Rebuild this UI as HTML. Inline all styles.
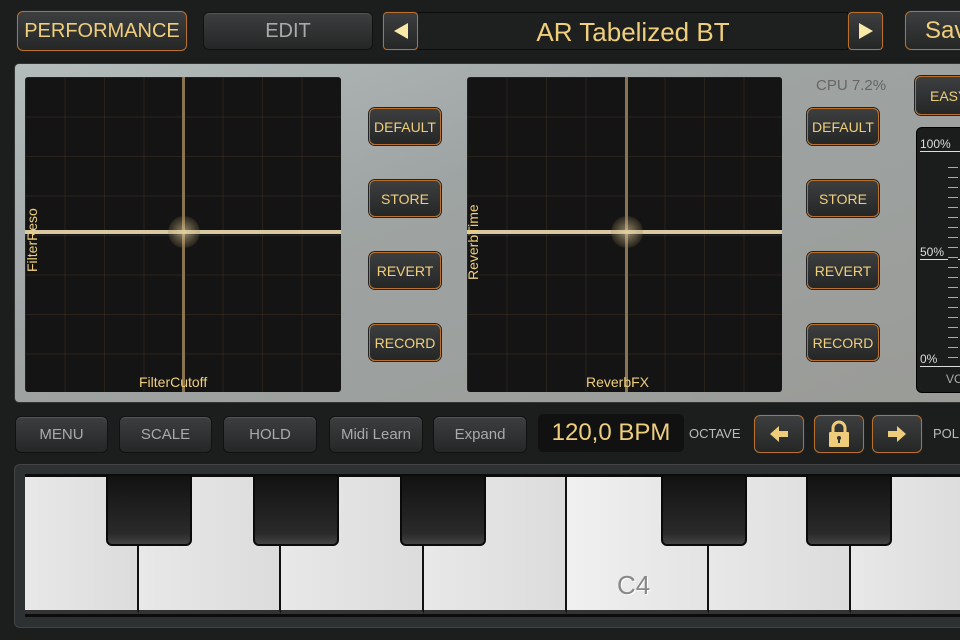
<!DOCTYPE html><html><head><style>
body{margin:0;width:960px;height:640px;overflow:hidden;background:#1c1d1d;font-family:"Liberation Sans",sans-serif;position:relative}
div{box-sizing:border-box}
.a{position:absolute}
.btn{position:absolute;border-radius:6px;background:linear-gradient(#3c3e3f,#252727);border:1px solid #111;color:#bbb;display:flex;align-items:center;justify-content:center;box-shadow:inset 0 1px 0 #555}
.ob{border:1.5px solid #b9702e;color:#f0cf7c;box-shadow:0 0 0 1px #222}
.pad{position:absolute;background-color:#141414;background-image:linear-gradient(90deg,rgba(80,60,40,.35) 1px,transparent 1px),linear-gradient(rgba(80,60,40,.35) 1px,transparent 1px);background-size:39.5px 39.5px;border-radius:3px}
.sb{width:72px;height:37px;font-size:14px}
.wk{position:absolute;top:477px;height:137px;background:linear-gradient(90deg,#e8e8e8,#dcdcdc);border-right:2px solid #111;border-bottom:4px solid #333}
.bk{position:absolute;top:474px;height:72px;width:86px;background:linear-gradient(#121212,#2a2a2a 85%,#444);border-radius:0 0 6px 6px;border:2px solid #0a0a0a}
.gb{height:37px;top:416px;font-size:15px;color:#aaa}
</style></head><body>
<div class="btn ob" style="left:17px;top:11px;width:170px;height:40px;font-size:20px;">PERFORMANCE</div>
<div class="btn" style="left:203px;top:12px;width:170px;height:38px;font-size:20px;color:#aaa">EDIT</div>
<div class="a" style="left:418px;top:12px;width:430px;height:38px;background:#1e1f1f;border:1px solid #0c0c0c;color:#f0cf7c;font-size:26px;text-align:center;line-height:38px">AR Tabelized BT</div>
<div class="btn ob" style="left:383px;top:12px;width:35px;height:38px;border-radius:4px"><svg width="16" height="18"><path d="M15 1V17L1 9Z" fill="#f8e9a6"/></svg></div>
<div class="btn ob" style="left:848px;top:12px;width:35px;height:38px;border-radius:4px"><svg width="16" height="18"><path d="M1 1V17L15 9Z" fill="#f8e9a6"/></svg></div>
<div class="btn ob" style="left:905px;top:11px;width:70px;height:39px;font-size:24px;justify-content:flex-start;padding-left:19px">Sav</div>

<div class="a" style="left:14px;top:63px;width:960px;height:340px;background:linear-gradient(160deg,#b4bcbc,#9ea4a3 40%,#9a9b97);border-radius:5px;border:1px solid #333"></div>
<div class="pad" style="left:25px;top:77px;width:316px;height:315px"></div>
<div class="pad" style="left:467px;top:77px;width:315px;height:315px"></div>
<div class="a" style="left:182px;top:77px;width:3px;height:315px;background:#8a7450"></div>
<div class="a" style="left:25px;top:230px;width:316px;height:4px;background:#d9c9a3"></div>
<div class="a" style="left:168px;top:216px;width:32px;height:32px;border-radius:50%;background:radial-gradient(rgba(230,210,160,.6),rgba(120,100,60,.2) 70%,transparent)"></div>
<div class="a" style="left:625px;top:77px;width:3px;height:315px;background:#8a7450"></div>
<div class="a" style="left:467px;top:230px;width:315px;height:4px;background:#d9c9a3"></div>
<div class="a" style="left:611px;top:216px;width:32px;height:32px;border-radius:50%;background:radial-gradient(rgba(230,210,160,.6),rgba(120,100,60,.2) 70%,transparent)"></div>
<div class="a" style="left:139px;top:374px;color:#f0cf7c;font-size:14px">FilterCutoff</div>
<div class="a" style="left:586px;top:374px;color:#f0cf7c;font-size:14px">ReverbFX</div>
<div class="a" style="left:24px;top:272px;color:#f0cf7c;font-size:14px;transform:rotate(-90deg);transform-origin:0 0;width:80px;line-height:16px">FilterReso</div>
<div class="a" style="left:465px;top:280px;color:#f0cf7c;font-size:14px;transform:rotate(-90deg);transform-origin:0 0;width:100px;line-height:16px">ReverbTime</div>

<div class="btn ob sb" style="left:369px;top:108px">DEFAULT</div>
<div class="btn ob sb" style="left:369px;top:180px">STORE</div>
<div class="btn ob sb" style="left:369px;top:252px">REVERT</div>
<div class="btn ob sb" style="left:369px;top:324px">RECORD</div>
<div class="btn ob sb" style="left:807px;top:108px">DEFAULT</div>
<div class="btn ob sb" style="left:807px;top:180px">STORE</div>
<div class="btn ob sb" style="left:807px;top:252px">REVERT</div>
<div class="btn ob sb" style="left:807px;top:324px">RECORD</div>
<div class="a" style="left:816px;top:77px;color:#666;font-size:15px">CPU 7.2%</div>
<div class="btn ob" style="left:915px;top:76px;width:60px;height:39px;font-size:14px;justify-content:flex-start;padding-left:14px">EASY</div>
<div class="a" style="left:916px;top:127px;width:60px;height:266px;background:#1b1c1c;border-radius:6px;border:1px solid #000"></div>
<div class="a" style="left:920px;top:137px;color:#ddd;font-size:12px;border-bottom:1px solid #ddd;width:40px">100%</div>
<div class="a" style="left:920px;top:245px;color:#ddd;font-size:12px;border-bottom:1px solid #ddd;width:40px">50%</div>
<div class="a" style="left:920px;top:352px;color:#ddd;font-size:12px;border-bottom:1px solid #ddd;width:40px">0%</div>
<div class="a" style="left:946px;top:372px;color:#aaa;font-size:12px">VO</div>
<div class="a" style="left:948px;top:158px;width:10px;height:200px;background:repeating-linear-gradient(#1b1c1c 0 9px,#aaa 9px 10px)"></div>

<div class="btn gb" style="left:15px;width:93px">MENU</div>
<div class="btn gb" style="left:119px;width:93px">SCALE</div>
<div class="btn gb" style="left:223px;width:94px">HOLD</div>
<div class="btn gb" style="left:329px;width:94px">Midi Learn</div>
<div class="btn gb" style="left:433px;width:94px">Expand</div>
<div class="a" style="left:538px;top:414px;width:146px;height:38px;background:#111;border-radius:5px;color:#f0cf7c;font-size:24px;line-height:38px;text-align:center">120,0 BPM</div>
<div class="a" style="left:689px;top:426px;color:#bbb;font-size:13px">OCTAVE</div>
<div class="btn ob" style="left:754px;top:415px;width:50px;height:38px"><svg width="20" height="18"><path d="M1 9L10 1V6H19V12H10V17Z" fill="#efcc7a"/></svg></div>
<div class="btn ob" style="left:814px;top:415px;width:50px;height:38px"><svg width="22" height="28"><path d="M5 12V8a6 6 0 0 1 12 0v4" stroke="#efcc7a" stroke-width="3" fill="none"/><rect x="1" y="12" width="20" height="15" rx="1" fill="#efcc7a"/><circle cx="11" cy="18" r="2" fill="#333"/><rect x="10" y="18" width="2" height="5" fill="#333"/></svg></div>
<div class="btn ob" style="left:872px;top:415px;width:50px;height:38px"><svg width="20" height="18"><path d="M19 9L10 1V6H1V12H10V17Z" fill="#efcc7a"/></svg></div>
<div class="a" style="left:933px;top:426px;color:#bbb;font-size:13px">POL</div>

<div class="a" style="left:14px;top:464px;width:960px;height:164px;background:#2e3131;border-radius:6px;border:1px solid #444"></div>
<div class="a" style="left:25px;top:474px;width:940px;height:143px;background:#0c0c0c"></div>
<div class="wk" style="left:25px;width:114px"></div>
<div class="wk" style="left:139px;width:142px"></div>
<div class="wk" style="left:281px;width:143px"></div>
<div class="wk" style="left:424px;width:143px"></div>
<div class="wk" style="left:567px;width:142px;background:linear-gradient(90deg,#f0f0f0,#e4e4e4)"></div>
<div class="wk" style="left:709px;width:142px"></div>
<div class="wk" style="left:851px;width:120px"></div>
<div class="a" style="left:617px;top:570px;color:#888;font-size:26px;text-shadow:1px 1px 0 #fff">C4</div>
<div class="bk" style="left:106px"></div>
<div class="bk" style="left:253px"></div>
<div class="bk" style="left:400px"></div>
<div class="bk" style="left:661px"></div>
<div class="bk" style="left:806px"></div>
</body></html>
